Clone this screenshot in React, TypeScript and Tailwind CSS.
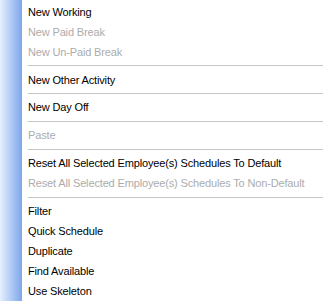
import React from 'react';

type Entry = { label: string; disabled?: boolean } | 'sep';

const entries: Entry[] = [
    { label: 'New Working' },
    { label: 'New Paid Break', disabled: true },
    { label: 'New Un-Paid Break', disabled: true },
    'sep',
    { label: 'New Other Activity' },
    'sep',
    { label: 'New Day Off' },
    'sep',
    { label: 'Paste', disabled: true },
    'sep',
    { label: 'Reset All Selected Employee(s) Schedules To Default' },
    { label: 'Reset All Selected Employee(s) Schedules To Non-Default', disabled: true },
    'sep',
    { label: 'Filter' },
    { label: 'Quick Schedule' },
    { label: 'Duplicate' },
    { label: 'Find Available' },
    { label: 'Use Skeleton' },
];

const App: React.FC = () => {
    return (
        <div className="w-[326px] h-[301px] overflow-hidden bg-white flex font-['Liberation_Sans',Arial,sans-serif] text-[11px] tracking-[-0.15px]">
            <div className="w-[22px] shrink-0 bg-gradient-to-r from-[#e6f0fe] to-[#7ea6ea]" />
            <div className="flex-1 flex flex-col pt-[2px] pl-[6px] pr-[3px]">
                {entries.map((entry, i) =>
                    entry === 'sep' ? (
                        <div key={i} className="h-[8px] flex items-center">
                            <div className="w-full h-px bg-[#c5c5c5]" />
                        </div>
                    ) : (
                        <div
                            key={i}
                            className={`h-5 flex items-center whitespace-nowrap ${entry.disabled ? 'text-[#acacac]' : 'text-black'}`}
                        >
                            {entry.label}
                        </div>
                    )
                )}
            </div>
        </div>
    );
};

export default App;
